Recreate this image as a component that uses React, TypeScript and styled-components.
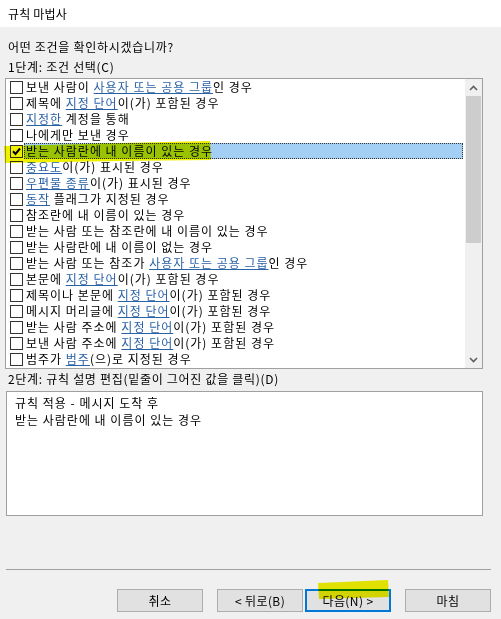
import styled, { createGlobalStyle } from 'styled-components';

const GlobalStyle = createGlobalStyle`
  html, body {
    margin: 0;
    padding: 0;
    background: #f0f0f0;
  }
  body {
    font-family: "Noto Sans CJK KR", "Noto Sans", sans-serif;
    font-size: 12px;
    color: #000;
  }
`;

type Part = { t: string; link?: boolean };

const rules: Part[][] = [
  [{ t: '보낸 사람이 ' }, { t: '사용자 또는 공용 그룹', link: true }, { t: '인 경우' }],
  [{ t: '제목에 ' }, { t: '지정 단어', link: true }, { t: '이(가) 포함된 경우' }],
  [{ t: '지정한', link: true }, { t: ' 계정을 통해' }],
  [{ t: '나에게만 보낸 경우' }],
  [{ t: '받는 사람란에 내 이름이 있는 경우' }],
  [{ t: '중요도', link: true }, { t: '이(가) 표시된 경우' }],
  [{ t: '우편물 종류', link: true }, { t: '이(가) 표시된 경우' }],
  [{ t: '동작', link: true }, { t: ' 플래그가 지정된 경우' }],
  [{ t: '참조란에 내 이름이 있는 경우' }],
  [{ t: '받는 사람 또는 참조란에 내 이름이 있는 경우' }],
  [{ t: '받는 사람란에 내 이름이 없는 경우' }],
  [{ t: '받는 사람 또는 참조가 ' }, { t: '사용자 또는 공용 그룹', link: true }, { t: '인 경우' }],
  [{ t: '본문에 ' }, { t: '지정 단어', link: true }, { t: '이(가) 포함된 경우' }],
  [{ t: '제목이나 본문에 ' }, { t: '지정 단어', link: true }, { t: '이(가) 포함된 경우' }],
  [{ t: '메시지 머리글에 ' }, { t: '지정 단어', link: true }, { t: '이(가) 포함된 경우' }],
  [{ t: '받는 사람 주소에 ' }, { t: '지정 단어', link: true }, { t: '이(가) 포함된 경우' }],
  [{ t: '보낸 사람 주소에 ' }, { t: '지정 단어', link: true }, { t: '이(가) 포함된 경우' }],
  [{ t: '범주가 ' }, { t: '범주', link: true }, { t: '(으)로 지정된 경우' }],
];

const SELECTED = 4;

const Window = styled.div`
  position: relative;
  width: 501px;
  height: 619px;
  display: flex;
  flex-direction: column;
  background: #f0f0f0;
  overflow: hidden;
`;

const TitleBar = styled.div`
  height: 27px;
  display: flex;
  align-items: center;
  padding-left: 8px;
  background: #fff;
  letter-spacing: 0.2px;
`;

const Main = styled.div`
  display: flex;
  flex-direction: column;
  padding: 10px 18px 0 5px;
`;

const Label = styled.div`
  height: 20px;
  line-height: 20px;
  padding-left: 3px;
  letter-spacing: 0.7px;
  white-space: nowrap;
`;

const ListBox = styled.div`
  margin-top: 1px;
  height: 289px;
  border: 1px solid #a0a0a0;
  background: #fff;
  display: flex;
`;

const Rows = styled.div`
  flex: 1;
  display: flex;
  flex-direction: column;
  overflow: hidden;
`;

const Row = styled.div`
  height: 16px;
  display: flex;
  align-items: center;
  padding-left: 4px;
  white-space: nowrap;
`;

const Check = styled.span`
  width: 11px;
  height: 11px;
  border: 1px solid #333;
  background: #fff;
  flex: none;
  display: flex;
  align-items: center;
  justify-content: center;
`;

const RowText = styled.span<{ $selected?: boolean }>`
  flex: 1;
  height: 16px;
  line-height: 14px;
  margin-left: 1px;
  margin-right: 2px;
  padding-left: 1px;
  box-sizing: border-box;
  letter-spacing: 1px;
  border: 1px dotted ${p => (p.$selected ? '#333' : 'transparent')};
  background: ${p => (p.$selected ? '#a4cff4' : 'transparent')};
`;

const Link = styled.span`
  color: #2a62a6;
  text-decoration: underline;
  text-decoration-color: #2a62a6;
  text-underline-offset: 1px;
`;

const ScrollBar = styled.div`
  width: 17px;
  flex: none;
  background: #f0f0f0;
  display: flex;
  flex-direction: column;
`;

const ScrollButton = styled.div`
  height: 17px;
  display: flex;
  align-items: center;
  justify-content: center;
`;

const Track = styled.div`
  flex: 1;
  display: flex;
  flex-direction: column;
`;

const Thumb = styled.div`
  height: 147px;
  margin: 0 1px;
  background: #cdcdcd;
`;

const DescBox = styled.div`
  margin: 2px 0 0 1px;
  height: 121px;
  border: 1px solid #a0a0a0;
  background: #fff;
  padding: 2px 0 0 8px;
  line-height: 17px;
  letter-spacing: 1px;
`;

const Footer = styled.div`
  margin-top: 53px;
  padding: 0 10px 0 6px;
  display: flex;
  flex-direction: column;
`;

const Separator = styled.div`
  height: 1px;
  background: #a0a0a0;
`;

const ButtonRow = styled.div`
  margin-top: 19px;
  display: flex;
  justify-content: flex-end;
`;

const Button = styled.div<{ $default?: boolean; $gap: number }>`
  width: 86px;
  height: 23px;
  box-sizing: border-box;
  margin-left: ${p => p.$gap}px;
  display: flex;
  align-items: center;
  justify-content: center;
  background: #e1e1e1;
  border: ${p => (p.$default ? '2px solid #0078d7' : '1px solid #adadad')};
  letter-spacing: 0.4px;
`;

const Marker = styled.svg`
  position: absolute;
  left: 0;
  top: 0;
  pointer-events: none;
  mix-blend-mode: multiply;
`;

const CheckMark = () => (
  <svg width="9" height="9" viewBox="0 0 9 9">
    <path d="M1 4.3 L3.5 7 L8 1.5" fill="none" stroke="#000" strokeWidth="2" />
  </svg>
);

const Chevron = ({ up }: { up?: boolean }) => (
  <svg width="9" height="6" viewBox="0 0 9 6">
    <path
      d={up ? 'M1 5 L4.5 1.5 L8 5' : 'M1 1 L4.5 4.5 L8 1'}
      fill="none"
      stroke="#606060"
      strokeWidth="1.6"
    />
  </svg>
);

export default function App() {
  return (
    <>
      <GlobalStyle />
      <Window>
        <TitleBar>규칙 마법사</TitleBar>
        <Main>
          <Label>어떤 조건을 확인하시겠습니까?</Label>
          <Label>1단계: 조건 선택(C)</Label>
          <ListBox>
            <Rows>
              {rules.map((parts, i) => (
                <Row key={i}>
                  <Check>{i === SELECTED && <CheckMark />}</Check>
                  <RowText $selected={i === SELECTED}>
                    {parts.map((p, j) =>
                      p.link ? <Link key={j}>{p.t}</Link> : <span key={j}>{p.t}</span>
                    )}
                  </RowText>
                </Row>
              ))}
            </Rows>
            <ScrollBar>
              <ScrollButton>
                <Chevron up />
              </ScrollButton>
              <Track>
                <Thumb />
              </Track>
              <ScrollButton>
                <Chevron />
              </ScrollButton>
            </ScrollBar>
          </ListBox>
          <Label>2단계: 규칙 설명 편집(밑줄이 그어진 값을 클릭)(D)</Label>
          <DescBox>
            <div>규칙 적용 - 메시지 도착 후</div>
            <div>받는 사람란에 내 이름이 있는 경우</div>
          </DescBox>
        </Main>
        <Footer>
          <Separator />
          <ButtonRow>
            <Button $gap={0}>취소</Button>
            <Button $gap={14}>&lt; 뒤로(B)</Button>
            <Button $gap={2} $default>다음(N) &gt;</Button>
            <Button $gap={14}>마침</Button>
          </ButtonRow>
        </Footer>
        <Marker width="501" height="619" viewBox="0 0 501 619">
          <path d="M4 146 L120 143 L210 141 L211 160 L120 161 L5 163 Z" fill="#eef000" />
          <path d="M318 583 L388 580 L389 597 L319 599 Z" fill="#eef000" />
        </Marker>
      </Window>
    </>
  );
}
